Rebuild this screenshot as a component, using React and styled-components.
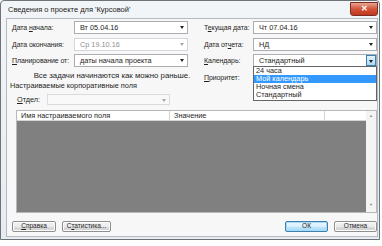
import styled, { createGlobalStyle } from "styled-components";

const GlobalStyle = createGlobalStyle`
  body {
    margin: 0;
    background: #ffffff;
    font-family: "Liberation Sans", "Noto Sans", sans-serif;
  }
`;

const Window = styled.div`
  width: 380px;
  height: 240px;
  border: 1px solid #6f7377;
  border-radius: 4px 4px 0 0;
  background: linear-gradient(180deg, #f2f5f8 0%, #e6ecf2 100%);
  display: flex;
  flex-direction: column;
  box-sizing: border-box;
`;

const TitleBar = styled.div`
  height: 17px;
  display: flex;
  align-items: center;
  justify-content: space-between;
  padding-left: 7px;
  font-size: 7.5px;
  color: #1b1b1b;
`;

const CloseBtn = styled.div`
  width: 26px;
  height: 12px;
  margin-right: 1px;
  margin-top: -1px;
  border: 1px solid #7a2e22;
  border-radius: 0 0 3px 3px;
  background: linear-gradient(180deg, #e8a493 0%, #d1543a 50%, #c0381f 100%);
  display: flex;
  align-items: center;
  justify-content: center;
  color: #fff;
  font-size: 8px;
  font-weight: bold;
  line-height: 1;
`;

const Client = styled.div`
  flex: 1;
  margin: 0 1px 2px 5px;
  border: 1px solid #b4bac1;
  background: #f7f7f7;
  display: flex;
  flex-direction: column;
  padding: 2px 0 4px 5px;
  font-size: 7.3px;
  color: #1e1e1e;
`;

const FormGrid = styled.div`
  display: grid;
  grid-template-columns: 62px 114px 16px 49px 124px;
  grid-template-rows: 13px 13px 13px 10px;
  row-gap: 3.5px;
  align-items: center;
`;

const Label = styled.span`
  white-space: nowrap;
  font-size: 7px;
  letter-spacing: -0.1px;
  grid-column: ${(p) => (p.$right ? 4 : 1)};
  u { text-decoration: underline; }
`;

const ComboBox = styled.div`
  position: relative;
  grid-column: ${(p) => (p.$right ? 5 : 2)};
  height: 13px;
  box-sizing: border-box;
  border: 1px solid ${(p) => (p.$disabled ? "#d3d6da" : "#abadb3")};
  background: #fff;
  display: flex;
  align-items: center;
  padding-left: 5px;
  color: ${(p) => (p.$disabled ? "#8f8f8f" : "#1e1e1e")};
  white-space: nowrap;
`;

const Arrow = styled.span`
  position: absolute;
  right: 3px;
  top: 4px;
  width: 0;
  height: 0;
  border-left: 2.5px solid transparent;
  border-right: 2.5px solid transparent;
  border-top: 3px solid ${(p) => (p.$disabled ? "#a8a8a8" : "#222")};
`;

const DropBtn = styled.span`
  position: absolute;
  right: 0;
  top: 0;
  bottom: 0;
  width: 10px;
  box-sizing: border-box;
  border: 1px solid #3c7fb1;
  background: linear-gradient(180deg, #e5f4fc 0%, #a9d9f5 100%);
  &::after {
    content: "";
    position: absolute;
    left: 2px;
    top: 4px;
    border-left: 2.5px solid transparent;
    border-right: 2.5px solid transparent;
    border-top: 3px solid #1a1a1a;
  }
`;

const DropList = styled.ul`
  position: absolute;
  left: -1px;
  right: -1px;
  top: 11px;
  margin: 0;
  padding: 0 0 1px 0;
  list-style: none;
  background: #fff;
  border: 1px solid #646464;
  z-index: 5;
`;

const DropItem = styled.li`
  height: 8px;
  line-height: 8px;
  padding-left: 2px;
  background: ${(p) => (p.$active ? "#3399ff" : "transparent")};
  color: ${(p) => (p.$active ? "#ffffff" : "#1e1e1e")};
`;

const Hint = styled.span`
  grid-column: 1 / 4;
  text-align: center;
  padding-left: 8px;
  white-space: nowrap;
  font-size: 7.8px;
`;

const PriorityLabel = styled(Label)`
  align-self: end;
`;

const SectionTitle = styled.div`
  line-height: 9px;
  margin-left: -2px;
`;

const DeptRow = styled.div`
  display: flex;
  align-items: center;
  gap: 7px;
  padding-left: 5px;
  margin-top: 4px;
`;

const DeptCombo = styled.div`
  position: relative;
  width: 123px;
  height: 11px;
  box-sizing: border-box;
  border: 1px solid #d9dbde;
  background: #f9f9f9;
`;

const Table = styled.div`
  margin: 5px 0 0 4px;
  height: 101px;
  border: 1px solid #b8b8b8;
  background: #fff;
  display: flex;
`;

const TableMain = styled.div`
  flex: 1;
  display: flex;
  flex-direction: column;
`;

const HeaderRow = styled.div`
  display: grid;
  grid-template-columns: 153px 155px 1fr;
  height: 9px;
  border-bottom: 1px solid #d5d5d5;
`;

const HeaderCell = styled.div`
  padding-left: 4px;
  line-height: 9px;
  border-right: 1px solid #d5d5d5;
  white-space: nowrap;
  &:last-child { border-right: none; }
`;

const GrayArea = styled.div`
  flex: 1;
  background: #808080;
`;

const ScrollBar = styled.div`
  width: 10px;
  background: #f4f4f4;
  display: flex;
  flex-direction: column;
  justify-content: space-between;
  align-items: center;
  padding: 2px 0 5px;
  font-size: 4px;
  color: #8a8a8a;
`;

const Footer = styled.div`
  margin-top: auto;
  display: flex;
  align-items: center;
  gap: 6px;
`;

const Button = styled.button`
  width: ${(p) => p.$w}px;
  height: 11px;
  padding: 0;
  border: 1px solid ${(p) => (p.$focus ? "#3c7fb1" : "#8e8f8f")};
  border-radius: 2px;
  background: ${(p) =>
    p.$focus
      ? "linear-gradient(180deg, #eaf6fd 0%, #d9f0fc 50%, #bee6fd 51%, #a7d9f5 100%)"
      : "linear-gradient(180deg, #f2f2f2 0%, #ebebeb 50%, #dddddd 51%, #cfcfcf 100%)"};
  box-shadow: ${(p) => (p.$focus ? "0 0 0 1px #a7d9f5 inset" : "inset 0 0 0 1px #fcfcfc")};
  font-family: inherit;
  font-size: 6.5px;
  color: #1e1e1e;
  line-height: 1;
  u { text-decoration: underline; }
`;

const Spacer = styled.div`
  flex: 1;
`;

export default function App() {
  return (
    <>
      <GlobalStyle />
      <Window>
        <TitleBar>
          <span>Сведения о проекте для 'Курсовой'</span>
          <CloseBtn>✕</CloseBtn>
        </TitleBar>
        <Client>
          <FormGrid>
            <Label>Дата <u>н</u>ачала:</Label>
            <ComboBox>Вт 05.04.16<Arrow /></ComboBox>
            <Label $right>Т<u>е</u>кущая дата:</Label>
            <ComboBox $right>Чт 07.04.16<Arrow /></ComboBox>

            <Label>Дата окончания:</Label>
            <ComboBox $disabled>Ср 19.10.16<Arrow $disabled /></ComboBox>
            <Label $right>Дата от<u>ч</u>ета:</Label>
            <ComboBox $right>НД<Arrow /></ComboBox>

            <Label><u>П</u>ланирование от:</Label>
            <ComboBox>даты начала проекта<Arrow /></ComboBox>
            <Label $right><u>К</u>алендарь:</Label>
            <ComboBox $right>
              Стандартный
              <DropBtn />
              <DropList>
                <DropItem>24 часа</DropItem>
                <DropItem $active>Мой календарь</DropItem>
                <DropItem>Ночная смена</DropItem>
                <DropItem>Стандартный</DropItem>
              </DropList>
            </ComboBox>

            <Hint>Все задачи начинаются как можно раньше.</Hint>
            <PriorityLabel $right><u>П</u>риоритет:</PriorityLabel>
          </FormGrid>

          <SectionTitle>Настраиваемые корпоративные поля</SectionTitle>
          <DeptRow>
            <span><u>О</u>тдел:</span>
            <DeptCombo><Arrow $disabled /></DeptCombo>
          </DeptRow>

          <Table>
            <TableMain>
              <HeaderRow>
                <HeaderCell>Имя настраиваемого поля</HeaderCell>
                <HeaderCell>Значение</HeaderCell>
                <HeaderCell />
              </HeaderRow>
              <GrayArea />
            </TableMain>
            <ScrollBar>
              <span>▲</span>
              <span>▼</span>
            </ScrollBar>
          </Table>

          <Footer>
            <Button $w={44}><u>С</u>правка</Button>
            <Button $w={49}>С<u>т</u>атистика...</Button>
            <Spacer />
            <Button $w={43} $focus>ОК</Button>
            <Button $w={43}>Отмена</Button>
          </Footer>
        </Client>
      </Window>
    </>
  );
}
